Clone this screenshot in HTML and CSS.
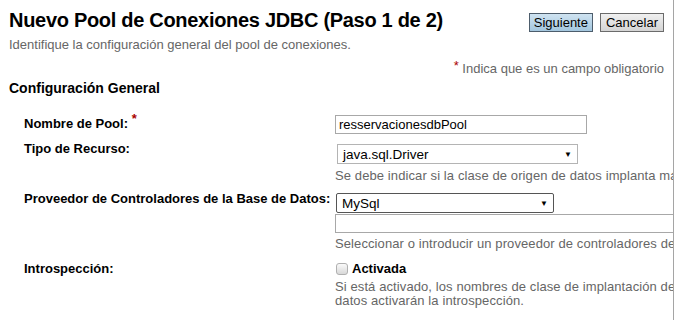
FILE: index.html
```html
<!DOCTYPE html>
<html lang="es">
<head>
  <meta charset="UTF-8">
  <title>Nuevo Pool de Conexiones JDBC</title>
  <link rel="stylesheet" href="styles.css">
</head>
<body>
  <div class="page">
    <div class="title-bar">
      <h1>Nuevo Pool de Conexiones JDBC (Paso 1 de 2)</h1>
      <div class="buttons">
        <button class="btn btn-primary">Siguiente</button>
        <button class="btn">Cancelar</button>
      </div>
    </div>
    <p class="page-help">Identifique la configuración general del pool de conexiones.</p>
    <p class="required-note"><span class="req">*</span> Indica que es un campo obligatorio</p>

    <h2>Configuración General</h2>

    <div class="form">
      <div class="row row-name">
        <label class="label">Nombre de Pool: <span class="req">*</span></label>
        <div class="value">
          <input type="text" class="text-field" value="resservacionesdbPool">
        </div>
      </div>

      <div class="row row-type">
        <label class="label">Tipo de Recurso:</label>
        <div class="value">
          <div class="select select-type"><span>java.sql.Driver</span><span class="arrow">&#9660;</span></div>
          <p class="help">Se debe indicar si la clase de origen de datos implanta más de una de las interfaces.</p>
        </div>
      </div>

      <div class="row row-vendor">
        <label class="label">Proveedor de Controladores de la Base de Datos:</label>
        <div class="value">
          <div class="select select-vendor"><span>MySql</span><span class="arrow">&#9660;</span></div>
          <input type="text" class="text-field wide">
          <p class="help">Seleccionar o introducir un proveedor de controladores de la base de datos</p>
        </div>
      </div>

      <div class="row row-intro">
        <label class="label">Introspección:</label>
        <div class="value">
          <label class="check"><span class="box"></span>Activada</label>
          <p class="help wrap">Si está activado, los nombres de clase de implantación de origen de datos activarán la introspección.</p>
        </div>
      </div>
    </div>
  </div>
</body>
</html>
```

FILE: styles.css
```css
body {
  margin: 0;
  font-family: "Liberation Sans", Arial, sans-serif;
  color: #000;
  background: #fff;
}
.page {
  width: 664px;
  height: 320px;
  padding-left: 9px;
  border-right: 1px solid #a5a5a5;
  overflow: hidden;
}
.title-bar {
  display: flex;
  justify-content: space-between;
  align-items: flex-start;
  padding-right: 9px;
}
h1 {
  margin: 8px 0 0;
  font-size: 20px;
  line-height: 24px;
  letter-spacing: -0.3px;
  font-weight: bold;
}
.buttons {
  display: flex;
  gap: 7px;
  margin-top: 13px;
}
.btn {
  height: 19px;
  padding: 0 4px;
  font-family: "Liberation Sans", Arial, sans-serif;
  font-size: 13px;
  line-height: 16px;
  color: #000;
  border: 1px solid #6b6b6b;
  background: linear-gradient(#f0f0f0, #d4d4d4);
}
.btn-primary {
  border-color: #4d5d6c;
  background: linear-gradient(#cfe3f1, #a3c6de);
}
.btn + .btn {
  padding: 0 5px;
}
.page-help {
  margin: 5px 0 0;
  font-size: 13px;
  line-height: 15px;
  color: #666;
}
.required-note {
  margin: 9px 0 0;
  padding-right: 9px;
  text-align: right;
  font-size: 13px;
  line-height: 15px;
  color: #666;
}
.req {
  color: #a00;
  font-size: 13px;
  line-height: 0;
  vertical-align: 3px;
}
h2 {
  margin: 4px 0 0;
  font-size: 14px;
  line-height: 16px;
  font-weight: bold;
}
.form {
  margin-top: 19px;
}
.row {
  display: grid;
  grid-template-columns: 311px 420px;
  padding-left: 15px;
}
.label {
  font-size: 13px;
  line-height: 16px;
  font-weight: bold;
}
.row-name .label {
  padding-top: 1px;
}
.row .label .req {
  vertical-align: 5px;
}
.text-field {
  display: block;
  box-sizing: border-box;
  width: 252px;
  height: 19px;
  margin: 0;
  padding: 1px 3px;
  border: 1px solid #a8a8a8;
  font-family: "Liberation Sans", Arial, sans-serif;
  font-size: 13px;
}
.text-field.wide {
  width: 360px;
  margin-top: 1px;
}
.select {
  display: flex;
  justify-content: space-between;
  align-items: center;
  box-sizing: border-box;
  height: 20px;
  padding: 0 5px 0 5px;
  border: 1px solid #b4b4b4;
  font-size: 13.5px;
}
.select .arrow {
  font-size: 8px;
}
.select-type {
  width: 241px;
  margin: 3px 0 0 2px;
}
.select-vendor {
  width: 218px;
  margin: 2px 0 0 1px;
  border-color: #555;
  border-radius: 2px;
}
.help {
  margin: 4px 0 0;
  font-size: 13px;
  line-height: 15px;
  letter-spacing: 0.1px;
  color: #666;
  white-space: nowrap;
}
.row-type {
  margin-top: 7px;
}
.row-vendor {
  margin-top: 8px;
}
.row-vendor .help {
  margin-top: 3px;
}
.row-intro {
  margin-top: 9px;
}
.row-intro .label {
  padding-top: 1px;
}
.help.wrap {
  white-space: normal;
  width: 420px;
  line-height: 14px;
  margin-top: 3px;
}
.check {
  display: flex;
  align-items: center;
  gap: 4px;
  margin: 1px 0 0 1px;
  font-size: 13px;
  line-height: 16px;
  font-weight: bold;
}
.box {
  width: 10px;
  height: 10px;
  border: 1px solid #b0b0b0;
  border-radius: 3px;
  background: linear-gradient(#fafafa, #d8d8d8);
}
```
